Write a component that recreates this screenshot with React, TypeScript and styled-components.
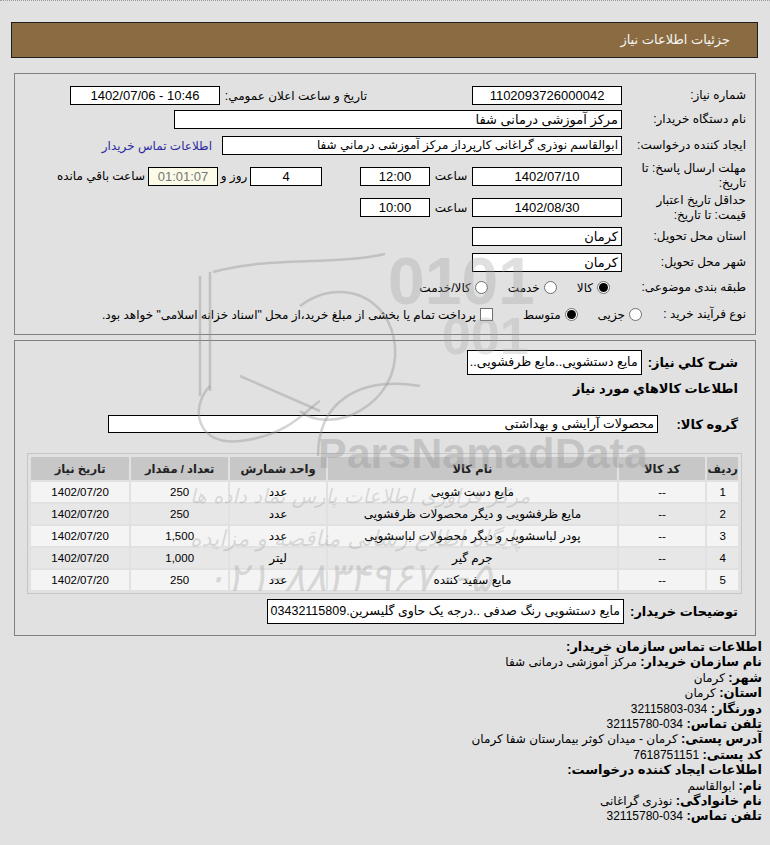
import React from "react";
import styled, { createGlobalStyle } from "styled-components";

const GlobalStyle = createGlobalStyle`
  html, body { margin: 0; padding: 0; }
  body {
    background: #e1e1e1;
    font-family: "Liberation Sans", "DejaVu Sans", sans-serif;
    font-size: 12px;
    color: #000;
  }
  * { box-sizing: border-box; }
`;

const Page = styled.div`
  position: relative;
  direction: rtl;
  width: 770px;
  min-height: 845px;
  border-top: 1px dotted #9a9a9a;
  padding-top: 21px;
  overflow: hidden;
`;

const TitleBar = styled.div`
  margin: 0 12px 0 11px;
  height: 36px;
  background: #8b6c42;
  border: 1px solid #1e1e1e;
  color: #f4f4f4;
  font-size: 13px;
  line-height: 34px;
  padding-right: 27px;
`;

const Panel = styled.div<{ $top: number; $pad: string }>`
  margin: ${(p) => p.$top}px 14px 0 14px;
  border: 1px solid #808080;
  padding: ${(p) => p.$pad};
`;

const Row = styled.div<{ $h: number; $pr?: number; $mt?: number }>`
  display: flex;
  align-items: center;
  height: ${(p) => p.$h}px;
  padding-right: ${(p) => p.$pr ?? 0}px;
  margin-top: ${(p) => p.$mt ?? 0}px;
`;

const Label = styled.div<{ $w?: number; $ml?: number }>`
  width: ${(p) => p.$w ?? 116}px;
  margin-left: ${(p) => p.$ml ?? 8}px;
  flex: none;
  line-height: 15px;
  white-space: nowrap;
`;

const BoldLabel = styled.div<{ $w?: number }>`
  width: ${(p) => (p.$w ? `${p.$w}px` : "auto")};
  margin-left: 6px;
  flex: none;
  font-weight: bold;
  font-size: 13px;
  white-space: nowrap;
`;

const Field = styled.div<{
  $w?: number;
  $h?: number;
  $align?: string;
  $bg?: string;
  $color?: string;
  $mr?: number;
  $fs?: number;
}>`
  width: ${(p) => (p.$w ? `${p.$w}px` : "auto")};
  height: ${(p) => p.$h ?? 19}px;
  margin-right: ${(p) => p.$mr ?? 0}px;
  flex: none;
  background: ${(p) => p.$bg ?? "#fff"};
  color: ${(p) => p.$color ?? "#000"};
  border: 1px solid #000;
  text-align: ${(p) => p.$align ?? "center"};
  padding: 0 3px;
  line-height: ${(p) => (p.$h ?? 19) - 2}px;
  white-space: nowrap;
  overflow: hidden;
  font-size: ${(p) => p.$fs ?? 13}px;
`;

const Unit = styled.div<{ $w?: number; $mr?: number }>`
  width: ${(p) => (p.$w ? `${p.$w}px` : "auto")};
  margin-right: ${(p) => p.$mr ?? 0}px;
  flex: none;
  text-align: center;
  white-space: nowrap;
`;

const SideGroup = styled.div<{ $gap: number; $w: number }>`
  display: flex;
  align-items: center;
  justify-content: space-between;
  margin-right: ${(p) => p.$gap}px;
  width: ${(p) => p.$w}px;
`;

const ContactLink = styled.a`
  margin-right: 10px;
  color: #2b2ba0;
  text-decoration: none;
  white-space: nowrap;
`;

const Options = styled.div<{ $mr: number }>`
  display: flex;
  align-items: center;
  gap: 20px;
  margin-right: ${(p) => p.$mr}px;
`;

const Option = styled.label<{ $mr?: number }>`
  display: flex;
  align-items: center;
  gap: 4px;
  white-space: nowrap;
  margin-right: ${(p) => p.$mr ?? 0}px;
`;

const Radio = styled.span<{ $on?: boolean }>`
  width: 13px;
  height: 13px;
  border-radius: 50%;
  border: 1px solid #707070;
  background: #fff;
  display: inline-flex;
  align-items: center;
  justify-content: center;
  flex: none;
  &::after {
    content: "";
    width: 9px;
    height: 9px;
    border-radius: 50%;
    background: #000;
    display: ${(p) => (p.$on ? "block" : "none")};
  }
`;

const Check = styled.span`
  width: 13px;
  height: 13px;
  border: 1px solid #707070;
  background: #fff;
  flex: none;
`;

const TableWrap = styled.div`
  margin: 17px 13px 0 12px;
  border: 1px solid #c6c6c6;
  padding: 1px;
`;

const Table = styled.table`
  width: 100%;
  border-collapse: separate;
  border-spacing: 2px;
`;

const Th = styled.th<{ $w: number }>`
  width: ${(p) => p.$w}px;
  height: 23px;
  background: #c7c7c7;
  font-weight: bold;
  font-size: 11.5px;
  color: #222;
  text-align: center;
  padding: 0;
`;

const Td = styled.td<{ $alt: boolean; $num?: boolean }>`
  height: 20px;
  background: ${(p) => (p.$alt ? "#e7e7e7" : "#f4f4f4")};
  text-align: center;
  white-space: nowrap;
  padding: 0;
  font-size: ${(p) => (p.$num ? 11.5 : 12)}px;
`;

const Contact = styled.div`
  padding: 3px 8px 0 0;
  font-size: 12px;
`;

const ContactLine = styled.div`
  height: 15.4px;
  line-height: 15.4px;
  white-space: nowrap;
`;

const Key = styled.b`
  font-weight: bold;
  font-size: 13px;
`;

const Watermark = styled.svg`
  position: absolute;
  left: 0;
  top: 0;
  pointer-events: none;
  direction: ltr;
`;

const items = [
  { code: "--", name: "مایع دست شویی", unit: "عدد", qty: "250", date: "1402/07/20" },
  { code: "--", name: "مایع ظرفشویی و دیگر محصولات ظرفشویی", unit: "عدد", qty: "250", date: "1402/07/20" },
  { code: "--", name: "پودر لباسشویی و دیگر محصولات لباسشویی", unit: "عدد", qty: "1,500", date: "1402/07/20" },
  { code: "--", name: "جرم گیر", unit: "لیتر", qty: "1,000", date: "1402/07/20" },
  { code: "--", name: "مایع سفید کننده", unit: "عدد", qty: "250", date: "1402/07/20" },
];

export default function App() {
  return (
    <>
      <GlobalStyle />
      <Page>
        <TitleBar>جزئیات اطلاعات نیاز</TitleBar>

        <Panel $top={15} $pad="10px 9px 5px 10px">
          <Row $h={23}>
            <Label>شماره نیاز:</Label>
            <Field $w={150}>1102093726000042</Field>
            <SideGroup $gap={105} $w={297}>
              <span>تاریخ و ساعت اعلان عمومي:</span>
              <Field $w={150} dir="ltr">1402/07/06 - 10:46</Field>
            </SideGroup>
          </Row>
          <Row $h={24}>
            <Label>نام دستگاه خریدار:</Label>
            <Field $w={448} $align="right">مرکز آموزشی درمانی شفا</Field>
          </Row>
          <Row $h={29}>
            <Label>ایجاد کننده درخواست:</Label>
            <Field $w={400} $align="right" $fs={12}>ابوالقاسم نوذری گراغانی کارپرداز مرکز آموزشی درماني شفا</Field>
            <ContactLink href="#">اطلاعات تماس خریدار</ContactLink>
          </Row>
          <Row $h={32}>
            <Label>
              مهلت ارسال پاسخ: تا
              <br />
              تاریخ:
            </Label>
            <Field $w={150}>1402/07/10</Field>
            <Unit $w={42}>ساعت</Unit>
            <Field $w={70}>12:00</Field>
            <Field $w={72} $mr={38}>4</Field>
            <Unit $w={32}>روز و</Unit>
            <Field $w={70} $bg="#fbfbe8" $color="#777">01:01:07</Field>
            <Unit $mr={3}>ساعت باقي مانده</Unit>
          </Row>
          <Row $h={31}>
            <Label>
              حداقل تاریخ اعتبار
              <br />
              قیمت: تا تاریخ:
            </Label>
            <Field $w={150}>1402/08/30</Field>
            <Unit $w={42}>ساعت</Unit>
            <Field $w={70}>10:00</Field>
          </Row>
          <Row $h={26}>
            <Label>استان محل تحویل:</Label>
            <Field $w={150} $align="right">کرمان</Field>
          </Row>
          <Row $h={26}>
            <Label>شهر محل تحویل:</Label>
            <Field $w={150} $align="right">کرمان</Field>
          </Row>
          <Row $h={25}>
            <Label>طبقه بندی موضوعی:</Label>
            <Options $mr={12}>
              <Option><Radio $on />کالا</Option>
              <Option><Radio />خدمت</Option>
              <Option><Radio />کالا/خدمت</Option>
            </Options>
          </Row>
          <Row $h={29}>
            <Label $w={100} $ml={4}>نوع فرآیند خرید :</Label>
            <Options $mr={0}>
              <Option><Radio />جزیی</Option>
              <Option><Radio $on />متوسط</Option>
              <Option $mr={10}>
                <Check />
                پرداخت تمام یا بخشی از مبلغ خرید،از محل "اسناد خزانه اسلامی" خواهد بود.
              </Option>
            </Options>
          </Row>
        </Panel>

        <Panel $top={5} $pad="7px 0 9px 0">
          <Row $h={28} $pr={17}>
            <BoldLabel>شرح کلي نیاز:</BoldLabel>
            <Field $w={175} $h={25} $align="right" $fs={12.5}>مایع دستشویی..مایع ظرفشویی..</Field>
          </Row>
          <Row $h={24} $pr={17}>
            <BoldLabel>اطلاعات کالاهاي مورد نیاز</BoldLabel>
          </Row>
          <Row $h={24} $pr={17} $mt={12}>
            <BoldLabel $w={74}>گروه کالا:</BoldLabel>
            <Field $w={550} $h={18} $align="right" $fs={12.5}>محصولات آرایشی و بهداشتی</Field>
          </Row>
          <TableWrap>
            <Table>
              <thead>
                <tr>
                  <Th $w={27}>ردیف</Th>
                  <Th $w={88}>کد کالا</Th>
                  <Th $w={290}>نام کالا</Th>
                  <Th $w={97}>واحد شمارش</Th>
                  <Th $w={98}>تعداد / مقدار</Th>
                  <Th $w={99}>تاریخ نیاز</Th>
                </tr>
              </thead>
              <tbody>
                {items.map((it, i) => (
                  <tr key={i}>
                    <Td $alt={i % 2 === 1} $num>{i + 1}</Td>
                    <Td $alt={i % 2 === 1} $num>{it.code}</Td>
                    <Td $alt={i % 2 === 1}>{it.name}</Td>
                    <Td $alt={i % 2 === 1}>{it.unit}</Td>
                    <Td $alt={i % 2 === 1} $num>{it.qty}</Td>
                    <Td $alt={i % 2 === 1} $num>{it.date}</Td>
                  </tr>
                ))}
              </tbody>
            </Table>
          </TableWrap>
          <Row $h={29} $pr={17} $mt={3}>
            <BoldLabel>توضیحات خریدار:</BoldLabel>
            <Field $h={25} $align="right" $fs={12.5}>مایع دستشویی رنگ صدفی ..درجه یک حاوی گلیسرین.03432115809</Field>
          </Row>
        </Panel>

        <Contact>
          <ContactLine><Key>اطلاعات تماس سازمان خریدار:</Key></ContactLine>
          <ContactLine><Key>نام سازمان خریدار:</Key> مرکز آموزشی درمانی شفا</ContactLine>
          <ContactLine><Key>شهر:</Key> کرمان</ContactLine>
          <ContactLine><Key>استان:</Key> کرمان</ContactLine>
          <ContactLine><Key>دورنگار:</Key> 034-32115803</ContactLine>
          <ContactLine><Key>تلفن تماس:</Key> 034-32115780</ContactLine>
          <ContactLine><Key>آدرس پستی:</Key> کرمان - میدان کوثر بیمارستان شفا کرمان</ContactLine>
          <ContactLine><Key>کد پستی:</Key> 7618751151</ContactLine>
          <ContactLine><Key>اطلاعات ایجاد کننده درخواست:</Key></ContactLine>
          <ContactLine><Key>نام:</Key> ابوالقاسم</ContactLine>
          <ContactLine><Key>نام خانوادگی:</Key> نوذری گراغانی</ContactLine>
          <ContactLine><Key>تلفن تماس:</Key> 034-32115780</ContactLine>
        </Contact>

        <Watermark width="770" height="845" viewBox="0 0 770 845">
          <g fill="none" stroke="rgba(150,150,150,0.42)" strokeWidth="2.5">
            <path d="M200 275 L200 395 M210 271 L210 390" />
            <path d="M213 271 C270 255 330 265 385 253" />
            <path d="M210 385 C190 405 195 445 240 440 C290 435 310 405 320 400" />
            <path d="M240 375 L320 410" />
            <path d="M300 305 C340 275 390 295 395 345 C400 405 330 435 300 410" />
            <path d="M318 455 C318 400 360 375 420 385" />
          </g>
          <g fontFamily="Liberation Sans" fontWeight="bold" direction="ltr" textAnchor="start">
            <text x="388" y="303" fontSize="66" fill="rgba(160,160,160,0.33)">0101</text>
            <text x="442" y="353" fontSize="52" fill="rgba(160,160,160,0.28)">001</text>
            <text x="318" y="467" fontSize="43" fill="rgba(150,150,150,0.38)">ParsNamadData</text>
          </g>
          <g fontFamily="DejaVu Sans" fontStyle="italic" fill="rgba(140,140,140,0.28)" direction="ltr" textAnchor="start">
            <text x="190" y="502" fontSize="20">مرکز فراوری اطلاعات پارس نماد داده ها</text>
            <text x="190" y="545" fontSize="22">پایگاه اطلاع رسانی مناقصه و مزایده</text>
            <text x="205" y="590" fontSize="40">۰۲۱-۸۸۳۴۹۶۷۰-۵</text>
          </g>
        </Watermark>
      </Page>
    </>
  );
}
